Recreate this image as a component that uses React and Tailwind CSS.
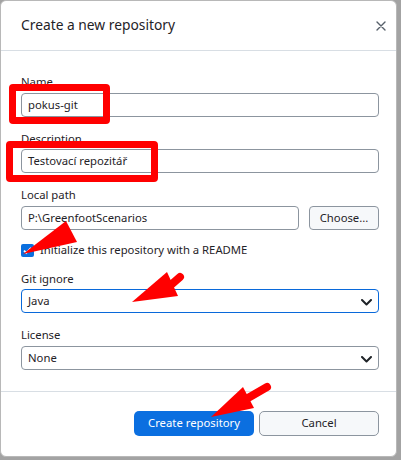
import React from "react";

const font = { fontFamily: '"Noto Sans", "Open Sans", sans-serif' };

const Chevron = () => (
  <svg width="11" height="7" viewBox="0 0 11 7" className="absolute right-[6px] top-[9px]">
    <path d="M1 1l4.5 4.5L10 1" fill="none" stroke="#1f2328" strokeWidth="2" strokeLinecap="round" strokeLinejoin="round" />
  </svg>
);

const App = () => {
  return (
    <div className="w-[401px] h-[460px] bg-[#a3a3a3] overflow-hidden relative" style={font}>
      {/* dialog */}
      <div className="w-[397px] h-[457px] bg-white rounded-[6px] border border-[#b8b8b8] flex flex-col text-[#1f2328]">
        {/* header */}
        <div className="h-[50px] border-b border-[#d8dee4] flex items-center justify-between pl-[20px] pr-[10px]">
          <h1 className="text-[13.8px] text-[#1f2328]">Create a new repository</h1>
          <svg width="10" height="10" viewBox="0 0 10 10">
            <path d="M1 1l8 8M9 1l-8 8" stroke="#57606a" strokeWidth="1.4" strokeLinecap="round" />
          </svg>
        </div>

        {/* form */}
        <div className="flex flex-col pl-[20px] pr-[17px] pt-[23px] text-[11.3px]">
          <label className="h-[16px] leading-[16px] mb-[3px]">Name</label>
          <div className="h-[24px] border border-[#8c959f] rounded-[4px] px-[6px] flex items-center">pokus-git</div>

          <label className="h-[16px] leading-[16px] mt-[14px] mb-[2px]">Description</label>
          <div className="h-[24px] border border-[#8c959f] rounded-[4px] px-[6px] flex items-center">Testovací repozitář</div>

          <label className="h-[16px] leading-[16px] mt-[14px] mb-[3px]">Local path</label>
          <div className="flex gap-[10px]">
            <div className="flex-1 h-[24px] border border-[#8c959f] rounded-[4px] px-[6px] flex items-center">P:\GreenfootScenarios</div>
            <div className="w-[70px] h-[24px] border border-[#8c959f] rounded-[4px] bg-[#f6f8fa] flex items-center justify-center">Choose...</div>
          </div>

          <div className="flex items-center gap-[6px] mt-[14px] h-[13px]">
            <div className="w-[13px] h-[13px] rounded-[2px] bg-[#0b6fde] flex items-center justify-center">
              <svg width="9" height="9" viewBox="0 0 9 9">
                <path d="M1 4.6l2.3 2.3L8 1.8" fill="none" stroke="white" strokeWidth="1.8" />
              </svg>
            </div>
            <span>Initialize this repository with a README</span>
          </div>

          <label className="h-[16px] leading-[16px] mt-[14px] mb-[2px]">Git ignore</label>
          <div className="relative h-[24px] border border-[#0969da] rounded-[4px] px-[6px] flex items-center">
            Java
            <Chevron />
          </div>

          <label className="h-[16px] leading-[16px] mt-[14px] mb-[3px]">License</label>
          <div className="relative h-[24px] border border-[#8c959f] rounded-[4px] px-[6px] flex items-center">
            None
            <Chevron />
          </div>
        </div>

        {/* footer */}
        <div className="mt-[21px] border-t border-[#d8dee4] flex justify-end gap-[5px] pr-[17px] pt-[19px] text-[11.3px]">
          <div className="w-[120px] h-[25px] rounded-[5px] bg-[#0b6fe0] text-white flex items-center justify-center">Create repository</div>
          <div className="w-[120px] h-[25px] rounded-[5px] border border-[#8c959f] bg-[#f6f8fa] flex items-center justify-center">Cancel</div>
        </div>
      </div>

      {/* red annotation boxes */}
      <div className="absolute left-[9px] top-[84px] w-[101px] h-[40px] border-[7px] border-[#ff0000] rounded-[4px]" />
      <div className="absolute left-[6px] top-[141px] w-[152px] h-[41px] border-[7px] border-[#ff0000] rounded-[4px]" />

      {/* red arrows */}
      <svg className="absolute left-0 top-0" width="401" height="460" viewBox="0 0 401 460">
        <polygon points="66,221 77,242 23,254" fill="#ff0000" />
        <polygon points="132,302 167,272 178,296" fill="#ff0000" />
        <line x1="172" y1="284" x2="180" y2="277" stroke="#ff0000" strokeWidth="8" strokeLinecap="round" />
        <polygon points="211,417 243,387 254,408" fill="#ff0000" />
        <line x1="248" y1="398" x2="267" y2="387" stroke="#ff0000" strokeWidth="8" strokeLinecap="round" />
      </svg>
    </div>
  );
};

export default App;
